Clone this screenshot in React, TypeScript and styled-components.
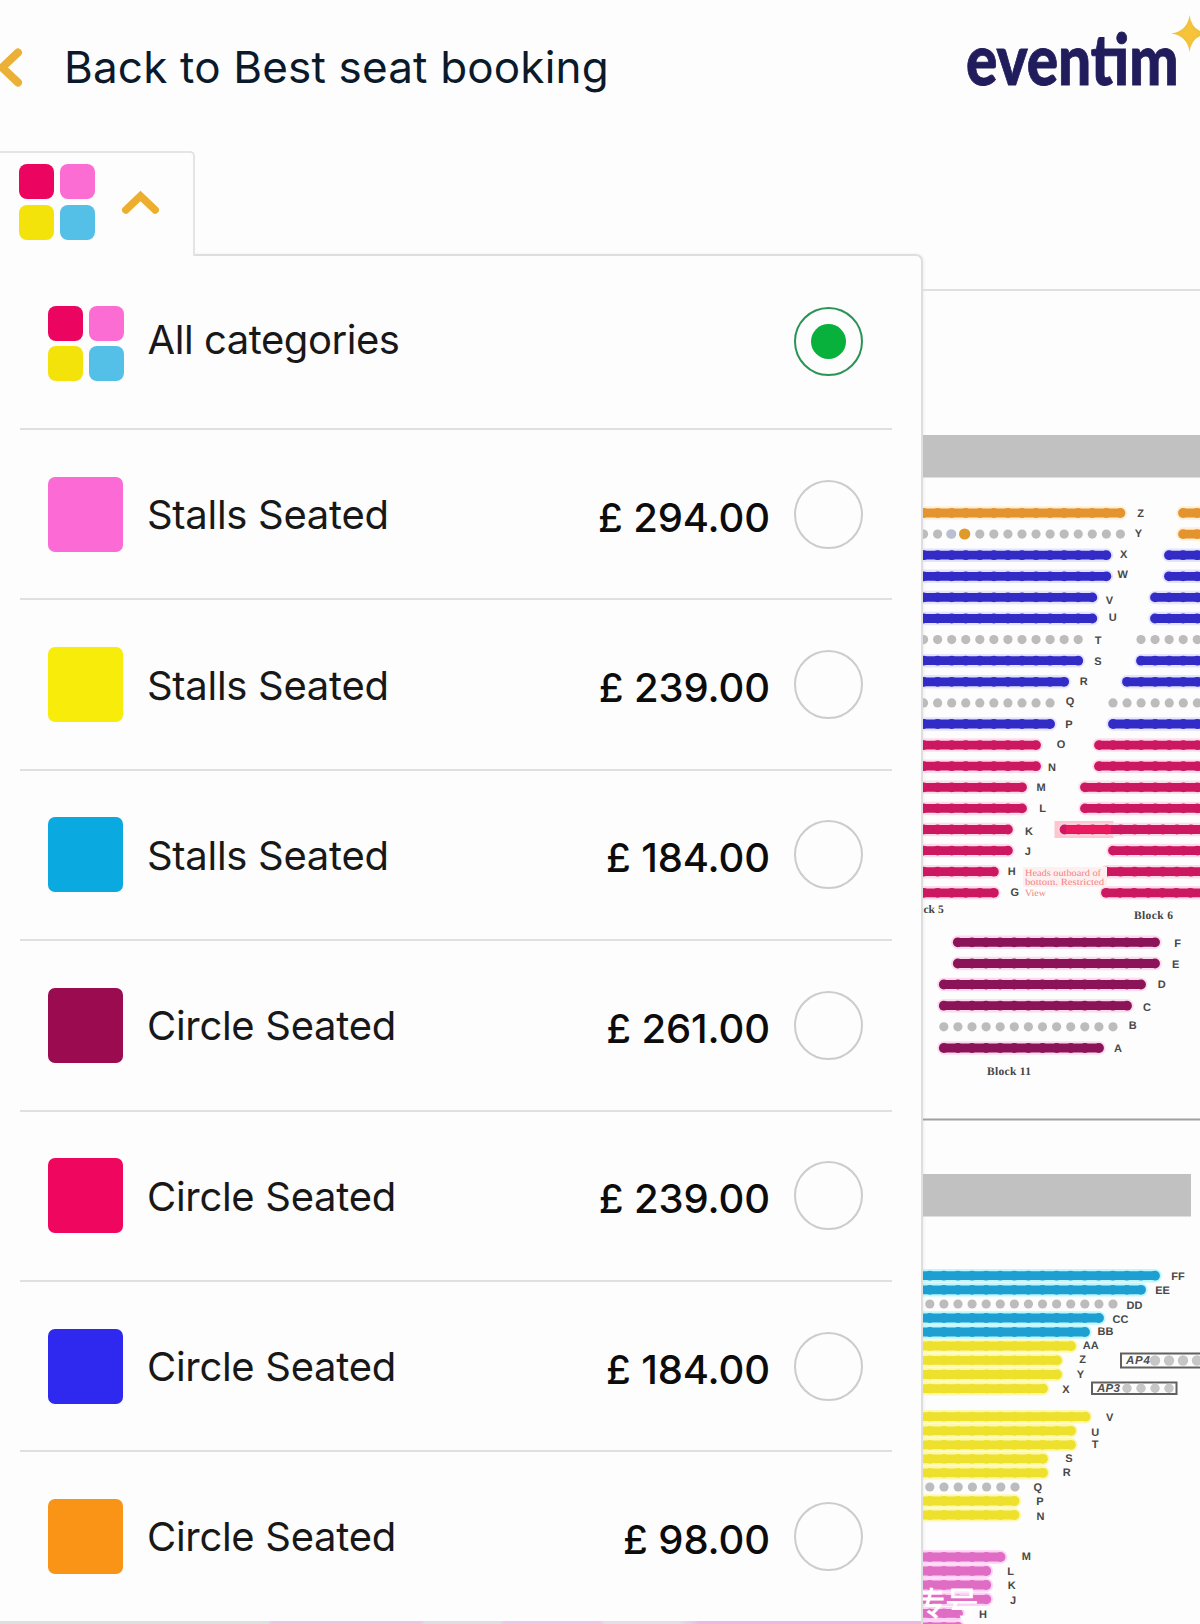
import React from "react";
import styled, { createGlobalStyle } from "styled-components";

const GlobalStyle = createGlobalStyle`
  * { box-sizing: border-box; }
  html, body { margin: 0; padding: 0; background: #fdfdfd; }
  body { width: 1200px; height: 1624px; overflow: hidden; font-family: Inter, "Liberation Sans", sans-serif; }
`;

const Page = styled.div`
  width: 1200px;
  height: 1624px;
  overflow: hidden;
  background: #fdfdfd;
`;

const Header = styled.header`
  display: flex;
  justify-content: space-between;
  height: 151px;
`;

const BackLink = styled.div`
  display: flex;
  align-items: center;
  gap: 41px;
  height: 134px;
`;

const BackTitle = styled.h1`
  margin: 0 0 1px;
  font-size: 44px;
  line-height: 54px;
  font-weight: 400;
  letter-spacing: 0.17px;
  color: #0b1a2b;
  white-space: nowrap;
`;

const Body = styled.main`
  display: grid;
  grid-template-columns: 923px 277px;
  height: 1473px;
`;

const Side = styled.section`
  display: flex;
  flex-direction: column;
`;

const Tab = styled.div`
  display: flex;
  align-items: center;
  gap: 26px;
  width: 195px;
  height: 105px;
  margin-bottom: -2px;
  padding: 0 0 5px 19px;
  background: #fdfdfd;
  border: 2px solid #e4e4e4;
  border-width: 2px 2px 0 0;
  border-top-right-radius: 5px;
  z-index: 1;
`;

const Panel = styled.div`
  flex: 1;
  display: flex;
  flex-direction: column;
  background: #fdfdfd;
  border: 2px solid #dedede;
  border-width: 2px 2px 0 0;
  border-top-right-radius: 7px;
  box-shadow: 1px 0 3px rgba(0, 0, 0, 0.06);
`;

const Row = styled.div<{ $first?: boolean; $last?: boolean }>`
  display: flex;
  align-items: center;
  flex: none;
  height: ${(p) => (p.$first ? "174px" : p.$last ? "168px" : "170.4px")};
  margin: 0 29px 0 20px;
  padding: ${(p) => (p.$first ? "3px 29px 0 28px" : "0 29px 0 28px")};
  border-bottom: ${(p) => (p.$last ? "0" : "2px solid #e0e0e0")};
`;

const Swatch = styled.span<{ $color: string }>`
  width: 75px;
  height: 75px;
  border-radius: 7px;
  background: ${(p) => p.$color};
`;

const QuadGrid = styled.span`
  display: grid;
  grid-template-columns: 35px 35px;
  grid-auto-rows: 35px;
  gap: 5.5px;
`;

const QuadCell = styled.span<{ $color: string }>`
  border-radius: 8px;
  background: ${(p) => p.$color};
`;

const Label = styled.span<{ $raised?: boolean }>`
  flex: 1;
  margin: ${(p) => (p.$raised ? "0 0 8px 24px" : "2px 0 0 24px")};
  font-size: 40px;
  line-height: 48px;
  letter-spacing: ${(p) => (p.$raised ? "-0.45px" : "-0.3px")};
  color: #181818;
  white-space: nowrap;
`;

const Price = styled.span`
  margin: 7px 24px 0 0;
  font-size: 40px;
  line-height: 48px;
  font-weight: 500;
  letter-spacing: -0.1px;
  color: #0c0c0c;
  white-space: nowrap;
`;

const Radio = styled.span<{ $on?: boolean }>`
  display: flex;
  align-items: center;
  justify-content: center;
  width: 69px;
  height: 69px;
  margin-top: ${(p) => (p.$on ? "-5px" : "0")};
  border: 2px solid ${(p) => (p.$on ? "#2a9356" : "#cccccc")};
  border-radius: 50%;
`;

const RadioDot = styled.span`
  width: 35px;
  height: 35px;
  border-radius: 50%;
  background: #08b03c;
`;

const BottomEdge = styled.div`
  flex: none;
  height: 3px;
  margin-top: auto;
  background: linear-gradient(90deg, #e0dfe0 0 268px, #f0c4de 272px 420px, #e2dbe1 425px 500px, #efc6e6 505px 600px, #e6dce5 605px 680px, #f0b6e3 700px);
`;

const MapColumn = styled.section`
  margin-top: 138px;
  border-top: 2px solid #e0e0e0;
`;

const MapSvg = styled.svg`
  display: block;
  text-rendering: geometricPrecision;
`;

const CATEGORIES = [
  { name: "Stalls Seated", price: "£ 294.00", color: "#fc6bd5" },
  { name: "Stalls Seated", price: "£ 239.00", color: "#f8ec0a" },
  { name: "Stalls Seated", price: "£ 184.00", color: "#0aaae1" },
  { name: "Circle Seated", price: "£ 261.00", color: "#9b0b50" },
  { name: "Circle Seated", price: "£ 239.00", color: "#ef065f" },
  { name: "Circle Seated", price: "£ 184.00", color: "#2f29ef" },
  { name: "Circle Seated", price: "£ 98.00", color: "#f99417" },
];

const QUAD = ["#ec0560", "#fb6dd2", "#f3e30b", "#54c0e8"];

const ORANGE = "#e3942f";
const BLUE = "#322bc6";
const RED = "#cb1861";
const PLUM = "#8b1458";
const CYAN = "#1e9fd2";
const YELLOW = "#eee12d";
const PINK = "#df6dc4";
const GREY = "#bcbcbc";
const PITCH = 14.06;

type SeatRow = {
  y: number;
  from: number;
  to: number;
  color: string;
  label?: string;
  lx?: number;
  ly?: number;
};

// Seat centres run from `from` to `to`; labels are centred on (lx, ly).
const L = (i: number, k: number, color: string, label: string, lx: number, ly: number): SeatRow => ({
  y: 513 + 21.1 * i, from: 1120.4 - PITCH * 15, to: 1120.4 - PITCH * k, color, label, lx, ly,
});
const R = (i: number, from: number, color: string): SeatRow => ({
  y: 513 + 21.1 * i, from, to: from + PITCH * 10, color,
});

const ROWS: SeatRow[] = [
  L(0, 0, ORANGE, "Z", 1140.7, 513),
  L(1, 0, GREY, "Y", 1138.5, 533.5),
  L(2, 1, BLUE, "X", 1123.7, 554),
  L(3, 1, BLUE, "W", 1122.7, 574),
  L(4, 2, BLUE, "V", 1109.5, 600),
  L(5, 2, BLUE, "U", 1112.7, 617.5),
  L(6, 3, GREY, "T", 1098, 640.5),
  L(7, 3, BLUE, "S", 1098, 661),
  L(8, 4, BLUE, "R", 1083.7, 681),
  L(9, 5, GREY, "Q", 1070, 701),
  L(10, 5, BLUE, "P", 1069, 724),
  L(11, 6, RED, "O", 1061, 744.5),
  L(12, 6, RED, "N", 1052, 767.5),
  L(13, 7, RED, "M", 1041, 787.5),
  L(14, 7, RED, "L", 1042.5, 808),
  L(15, 8, RED, "K", 1029, 831),
  L(16, 8, RED, "J", 1027.7, 851.5),
  L(17, 9, RED, "H", 1011.7, 871.5),
  L(18, 9, RED, "G", 1014.7, 892),
  R(0, 1183, ORANGE), R(1, 1183, ORANGE),
  R(2, 1169, BLUE), R(3, 1169, BLUE),
  R(4, 1155, BLUE), R(5, 1155, BLUE),
  R(6, 1141, GREY), R(7, 1141, BLUE),
  R(8, 1127, BLUE), R(9, 1113, GREY), R(10, 1113, BLUE),
  R(11, 1099, RED), R(12, 1099, RED),
  R(13, 1085, RED), R(14, 1085, RED),
  R(15, 1064.5, RED), R(16, 1113, RED),
  R(17, 1106.5, RED), R(18, 1106, RED),
  { y: 942.3, from: 957.8, to: 1155, color: PLUM, label: "F", lx: 1177.7, ly: 943.5 },
  { y: 963.5, from: 957.8, to: 1155, color: PLUM, label: "E", lx: 1175.7, ly: 964 },
  { y: 984.5, from: 943.8, to: 1141, color: PLUM, label: "D", lx: 1161.7, ly: 984.5 },
  { y: 1005.7, from: 943.8, to: 1127, color: PLUM, label: "C", lx: 1147, ly: 1007 },
  { y: 1026.8, from: 943.8, to: 1113, color: GREY, label: "B", lx: 1132.7, ly: 1025 },
  { y: 1048, from: 943.8, to: 1099, color: PLUM, label: "A", lx: 1118, ly: 1048 },
  { y: 1275.7, from: 915.8, to: 1155, color: CYAN, label: "FF", lx: 1178, ly: 1276 },
  { y: 1289.8, from: 915.8, to: 1141, color: CYAN, label: "EE", lx: 1162.5, ly: 1290 },
  { y: 1304, from: 929.8, to: 1113, color: GREY, label: "DD", lx: 1134.5, ly: 1305 },
  { y: 1318, from: 915.8, to: 1099, color: CYAN, label: "CC", lx: 1120.5, ly: 1319 },
  { y: 1332, from: 915.8, to: 1085, color: CYAN, label: "BB", lx: 1105.5, ly: 1331 },
  { y: 1346, from: 915.8, to: 1071, color: YELLOW, label: "AA", lx: 1090.8, ly: 1345 },
  { y: 1360.4, from: 915.8, to: 1057, color: YELLOW, label: "Z", lx: 1082.5, ly: 1359.5 },
  { y: 1374.5, from: 915.8, to: 1057, color: YELLOW, label: "Y", lx: 1080.5, ly: 1374 },
  { y: 1388.6, from: 915.8, to: 1043, color: YELLOW, label: "X", lx: 1066, ly: 1389 },
  { y: 1416.7, from: 915.8, to: 1085.5, color: YELLOW, label: "V", lx: 1109.7, ly: 1417.5 },
  { y: 1430.8, from: 915.8, to: 1071, color: YELLOW, label: "U", lx: 1095.3, ly: 1432 },
  { y: 1444.8, from: 915.8, to: 1071, color: YELLOW, label: "T", lx: 1095, ly: 1444 },
  { y: 1458.8, from: 915.8, to: 1043, color: YELLOW, label: "S", lx: 1069, ly: 1458 },
  { y: 1472.8, from: 915.8, to: 1043, color: YELLOW, label: "R", lx: 1066.7, ly: 1472.5 },
  { y: 1487, from: 929.8, to: 1015, color: GREY, label: "Q", lx: 1037.7, ly: 1487 },
  { y: 1501, from: 915.8, to: 1014.5, color: YELLOW, label: "P", lx: 1040, ly: 1501.5 },
  { y: 1515, from: 915.8, to: 1014.5, color: YELLOW, label: "N", lx: 1040.5, ly: 1516 },
  { y: 1557, from: 915.8, to: 1000.5, color: PINK, label: "M", lx: 1026.3, ly: 1556.5 },
  { y: 1571, from: 915.8, to: 986.3, color: PINK, label: "L", lx: 1010.5, ly: 1571 },
  { y: 1585, from: 915.8, to: 986.3, color: PINK, label: "K", lx: 1011.7, ly: 1585 },
  { y: 1599.3, from: 915.8, to: 986.3, color: PINK, label: "J", lx: 1013, ly: 1600 },
  { y: 1613.4, from: 915.8, to: 958, color: PINK, label: "H", lx: 983, ly: 1614 },
  { y: 1627, from: 915.8, to: 958, color: PINK },
];

const HALO: Record<string, string> = {
  [CYAN]: "#a9f6ff",
  [YELLOW]: "#fcf79a",
  [PINK]: "#ffc4f4",
  [RED]: "#ffd3e6",
  [PLUM]: "#fbd0e8",
  [BLUE]: "#dddcff",
  [ORANGE]: "#ffeacb",
};

function Seats({ row }: { row: SeatRow }) {
  const n = Math.round((row.to - row.from) / PITCH);
  const step = n ? (row.to - row.from) / n : 0;
  return (
    <g fill={row.color} stroke={row.color}>
      {row.color !== GREY && <line x1={row.from} x2={row.to} y1={row.y} y2={row.y} strokeWidth={8.8} />}
      {Array.from({ length: n + 1 }, (_, i) => (
        <circle key={i} cx={row.from + i * step} cy={row.y} r={row.color === GREY ? 4.6 : 4.9} stroke="none" />
      ))}
    </g>
  );
}

function SeatMap() {
  return (
    <MapSvg width="277" height="1333" viewBox="923 291 277 1333">
      <rect x="923" y="435" width="277" height="42.5" fill="#c1c1c1" />
      <rect x="923" y="1174" width="268" height="42.5" fill="#c1c1c1" />
      <rect x="923" y="1118.5" width="277" height="2" fill="#a0a0a0" />
      <rect x="1054.5" y="821" width="59" height="17" fill="#ffc6cd" />
      {ROWS.filter((r) => HALO[r.color]).map((r, i) => (
        <line key={i} x1={r.from} x2={r.to} y1={r.y} y2={r.y} stroke={HALO[r.color]} strokeWidth="13.5" strokeLinecap="round" opacity="0.75" />
      ))}
      {ROWS.map((r, i) => <Seats key={i} row={r} />)}
      <line x1="1066" x2="1111" y1="829.5" y2="829.5" stroke="#e91b5e" strokeWidth="8" />
      <circle cx="964.6" cy="534" r="5.6" fill="#e09a2a" />
      <circle cx="950.8" cy="534" r="4.6" fill="#b9c0d2" />
      <g fontFamily='"Liberation Sans", Arial, sans-serif' fontWeight="700" fontSize="11" fill="#484848" textAnchor="middle">
        {ROWS.filter((r) => r.label).map((r, i) => (
          <text key={i} x={r.lx} y={(r.ly ?? 0) + 3.9}>{r.label}</text>
        ))}
      </g>
      <g fontFamily='"Liberation Serif", serif' fontWeight="700" fontSize="11.5" fill="#454545">
        <text x="923.5" y="913">ck 5</text>
        <text x="1134" y="918.5" textLength="39">Block 6</text>
        <text x="987" y="1075" textLength="44">Block 11</text>
      </g>
      <rect x="1023" y="867" width="84" height="20" fill="#fff0ef" />
      <g fontFamily='"Liberation Serif", serif' fontSize="9.5" fill="#ec8585">
        <text x="1025" y="875.5" textLength="76" lengthAdjust="spacingAndGlyphs">Heads outboard of</text>
        <text x="1025" y="884.5" textLength="79" lengthAdjust="spacingAndGlyphs">bottom. Restricted</text>
        <text x="1025" y="895.5" textLength="21" lengthAdjust="spacingAndGlyphs">View</text>
      </g>
      <g fill="#fdfdfd" stroke="#606060" strokeWidth="2">
        <rect x="1121" y="1353.5" width="90" height="14" />
        <rect x="1092" y="1382.5" width="84.5" height="11.5" />
      </g>
      <g fill="#c6c6c6">
        {[1155, 1169, 1183, 1197].map((x) => <circle key={x} cx={x} cy="1360.5" r="5.2" />)}
        {[1127, 1141, 1155, 1169].map((x) => <circle key={x} cx={x} cy="1388.3" r="4.7" />)}
      </g>
      <g fontFamily='"Liberation Sans", Arial, sans-serif' fontWeight="700" fontStyle="italic" fontSize="11.5" fill="#505050">
        <text x="1126" y="1364.3" textLength="24">AP4</text>
        <text x="1097" y="1392.4" textLength="23">AP3</text>
      </g>
      <text x="911" y="1615.5" fontFamily='"Noto Sans CJK SC", sans-serif' fontSize="34" fontWeight="500" fill="#ffffff">传号</text>
    </MapSvg>
  );
}

function Logo() {
  return (
    <svg width="240" height="110" viewBox="960 0 240 110">
      <text x="966" y="84.5" fontFamily="Lato, sans-serif" fontWeight="900" fontSize="70" fill="#211d5c" stroke="#211d5c" strokeWidth="0.9" textLength="212.5" lengthAdjust="spacingAndGlyphs">eventim</text>
      <path d="M1189.5 15 Q1191.5 31 1208 33.5 Q1191.5 36 1189.5 52 Q1187.5 36 1171 33.5 Q1187.5 31 1189.5 15Z" fill="#f2c23e" />
      <path d="M1189.5 24 L1192.8 30.2 L1199 33.5 L1192.8 36.8 L1189.5 43 L1186.2 36.8 L1180 33.5 L1186.2 30.2Z" fill="#f6c436" />
    </svg>
  );
}

function Quad() {
  return <QuadGrid>{QUAD.map((c) => <QuadCell key={c} $color={c} />)}</QuadGrid>;
}

export default function App() {
  return (
    <Page>
      <GlobalStyle />
      <Header>
        <BackLink>
          <svg width="23" height="44" viewBox="0 0 23 44">
            <path d="M18 7.5 L2 22.5 L18 37.5" fill="none" stroke="#eab038" strokeWidth="8" strokeLinecap="round" strokeLinejoin="round" />
          </svg>
          <BackTitle>Back to Best seat booking</BackTitle>
        </BackLink>
        <Logo />
      </Header>
      <Body>
        <Side>
          <Tab>
            <Quad />
            <svg width="40" height="28" viewBox="0 0 40 28">
              <path d="M4.8 22 L19.5 8 L34.2 22" fill="none" stroke="#eeae2d" strokeWidth="7.5" strokeLinecap="round" strokeLinejoin="miter" />
            </svg>
          </Tab>
          <Panel>
            <Row $first>
              <Quad />
              <Label $raised>All categories</Label>
              <Radio $on><RadioDot /></Radio>
            </Row>
            {CATEGORIES.map((c, i) => (
              <Row key={i} $last={i === CATEGORIES.length - 1}>
                <Swatch $color={c.color} />
                <Label>{c.name}</Label>
                <Price>{c.price}</Price>
                <Radio />
              </Row>
            ))}
            <BottomEdge />
          </Panel>
        </Side>
        <MapColumn>
          <SeatMap />
        </MapColumn>
      </Body>
    </Page>
  );
}
